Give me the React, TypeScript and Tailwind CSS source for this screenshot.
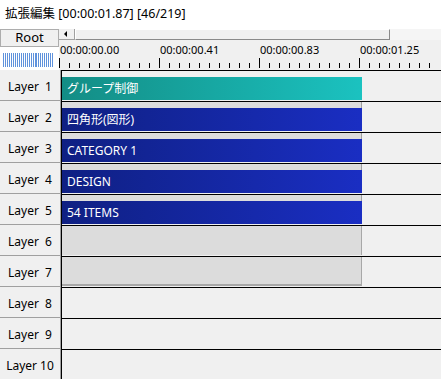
const layers = [
  { name: 'Layer  1', clip: 'グループ制御', kind: 'teal' },
  { name: 'Layer  2', clip: '四角形(図形)', kind: 'blue' },
  { name: 'Layer  3', clip: 'CATEGORY 1', kind: 'blue' },
  { name: 'Layer  4', clip: 'DESIGN', kind: 'blue' },
  { name: 'Layer  5', clip: '54 ITEMS', kind: 'blue' },
  { name: 'Layer  6', clip: '', kind: 'group' },
  { name: 'Layer  7', clip: '', kind: 'groupEnd' },
  { name: 'Layer  8', clip: '', kind: 'none' },
  { name: 'Layer  9', clip: '', kind: 'none' },
  { name: 'Layer 10', clip: '', kind: 'none' },
];

const marks = ['00:00:00.00', '00:00:00.41', '00:00:00.83', '00:00:01.25'];

function Ruler() {
  const ticks = Array.from({ length: 38 }, (_, i) => i);
  return (
    <svg width="379" height="13" className="block">
      {ticks.map((i) => {
        const x = i * 10 + 0.5;
        const major = i % 10 === 0;
        return <line key={i} x1={x} x2={x} y1={major ? 1 : 6} y2={11} stroke="#000" strokeWidth="1" />;
      })}
    </svg>
  );
}

function Track({ clip, kind }: { clip: string; kind: string }) {
  if (kind === 'teal') {
    return (
      <div className="flex-1 h-full border-t border-l border-black bg-[#f0f0f0] pt-[6px]">
        <div className="h-[23px] w-[300px] bg-gradient-to-r from-[#138d85] to-[#1bc2c0] flex items-center pl-[5px] pt-[1px] text-white text-[12px]">
          {clip}
        </div>
      </div>
    );
  }
  if (kind === 'blue') {
    return (
      <div className="flex-1 h-full border-t border-l border-black bg-[#f0f0f0]">
        <div className="h-[6px] w-[300px] bg-[#dcdcdc] border-r border-[#a0a0a0]" />
        <div className="h-[23px] w-[300px] bg-gradient-to-r from-[#0f2083] to-[#1a2ec3] flex items-center pl-[5px] pt-[1px] text-white text-[12px]">
          {clip}
        </div>
      </div>
    );
  }
  if (kind === 'group' || kind === 'groupEnd') {
    return (
      <div className="flex-1 h-full border-t border-l border-black bg-[#f0f0f0]">
        <div
          className={
            kind === 'groupEnd'
              ? 'h-[29px] w-[300px] bg-[#dcdcdc] border-r border-b-2 border-[#a8a8a8]'
              : 'h-[29px] w-[300px] bg-[#dcdcdc] border-r border-[#a8a8a8]'
          }
        />
      </div>
    );
  }
  return <div className="flex-1 h-full border-t border-l border-black bg-[#f0f0f0]" />;
}

export default function App() {
  return (
    <div className="w-[441px] h-[379px] overflow-hidden bg-[#f0f0f0] text-black font-['Noto_Sans','Noto_Sans_CJK_JP',sans-serif]">
      {/* Title */}
      <div className="h-[28px] bg-white pl-[5px] flex items-center text-[12.5px] whitespace-pre">
        拡張編集 [00:00:01.87] [46/219]
      </div>

      {/* Header */}
      <div className="flex h-[42px] bg-white">
        <div className="w-[61px] flex flex-col">
          <div className="mt-[1px] h-[18px] w-[59px] border border-[#adadad] bg-[#f0f0f0] flex items-center justify-center text-[13px]">
            Root
          </div>
          <div className="mt-[6px] ml-[3px] h-[14px] w-[51px] flex">
            {Array.from({ length: 26 }, (_, i) => (
              <div key={i} className="w-[1px] h-full bg-[#5f92dc] mr-[1px]" />
            ))}
          </div>
        </div>
        <div className="w-[1px]" />
        <div className="flex-1 flex flex-col bg-[#f0f0f0]">
          <div className="h-[12px] bg-white pt-[1px] flex">
            <div className="w-[16px] h-[11px] bg-[#f0f0f0] border-r border-b border-[#a0a0a0] flex items-center pl-[5px]">
              <div className="w-0 h-0 border-y-[3px] border-y-transparent border-r-[3px] border-r-black" />
            </div>
            <div className="w-[315px] h-[11px] bg-[#f0f0f0] border-t border-l border-white border-r border-b border-r-[#8a8a8a] border-b-[#8a8a8a]" />
            <div className="flex-1 h-[11px] bg-[#f5f5f5]" />
          </div>
          <div className="h-[17px] flex items-center text-[11px] leading-none pl-[1px] pt-[1px]">
            {marks.map((m) => (
              <div key={m} className="w-[100px] shrink-0">
                {m}
              </div>
            ))}
          </div>
          <Ruler />
        </div>
      </div>

      {/* Layers */}
      {layers.map((l) => (
        <div key={l.name} className="flex h-[31px]">
          <div className="w-[61px] shrink-0 h-full border-r border-b border-[#a0a0a0] bg-[#f0f0f0] flex items-center justify-center pt-[3px] text-[12px] whitespace-pre">
            {l.name}
          </div>
          <Track clip={l.clip} kind={l.kind} />
        </div>
      ))}
    </div>
  );
}
